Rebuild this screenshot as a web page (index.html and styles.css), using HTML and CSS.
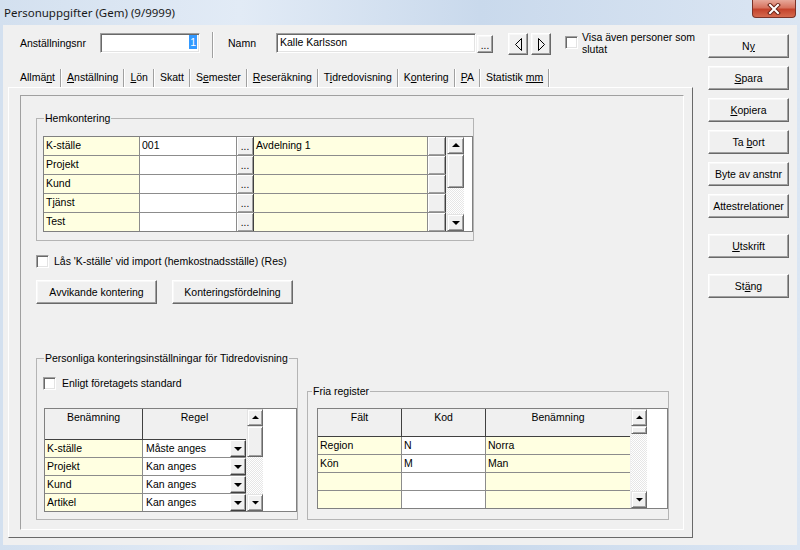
FILE: index.html
```html
<!DOCTYPE html>
<html lang="sv">
<head>
<meta charset="utf-8">
<title>Personuppgifter</title>
<link rel="stylesheet" href="styles.css">
</head>
<body>
<div class="window">
  <div class="titlebar">
    <span class="title">Personuppgifter (Gem) (9/9999)</span>
    <span class="close"><svg width="14" height="12" viewBox="0 0 14 12"><path d="M3 2 L11 10 M11 2 L3 10" stroke="#6a2418" stroke-width="4" stroke-linecap="square"/><path d="M3 2 L11 10 M11 2 L3 10" stroke="#fff" stroke-width="2" stroke-linecap="square"/></svg></span>
  </div>
  <div class="client">
    <div class="main">
      <div class="toprow">
        <span class="lbl lbl-nr">Anställningsnr</span>
        <div class="edit edit-nr"><span class="sel">1</span></div>
        <div class="vsep"></div>
        <span class="lbl lbl-namn">Namn</span>
        <div class="edit edit-namn">Kalle Karlsson</div>
        <div class="btn btn-dots">...</div>
        <div class="btn btn-arrow"><svg width="18" height="20" viewBox="0 0 18 20"><polygon points="12.5,4.5 6.5,10.5 12.5,16.5" fill="none" stroke="#000" stroke-width="1"/></svg></div>
        <div class="btn btn-arrow btn-arrow2"><svg width="18" height="20" viewBox="0 0 18 20"><polygon points="6.5,4.5 12.5,10.5 6.5,16.5" fill="none" stroke="#000" stroke-width="1"/></svg></div>
        <div class="check check-visa"><span class="box"></span><span class="check-text">Visa även personer som<br>slutat</span></div>
      </div>
      <div class="tabs">
        <span class="tab">Allmä<u>n</u>t</span>
        <span class="tab"><u>A</u>nställning</span>
        <span class="tab"><u>L</u>ön</span>
        <span class="tab">Skatt</span>
        <span class="tab">S<u>e</u>mester</span>
        <span class="tab"><u>R</u>eseräkning</span>
        <span class="tab">T<u>i</u>dredovisning</span>
        <span class="tab">K<u>o</u>ntering</span>
        <span class="tab"><u>P</u>A</span>
        <span class="tab">Statistik <u>mm</u></span>
      </div>
      <div class="tabpanel">
        <div class="inner">
          <fieldset class="group group-hem">
            <legend>Hemkontering</legend>
            <div class="dg dg-hem">
              <div class="dg-body">
                <div class="dg-row"><span class="c y h1">K-ställe</span><span class="c w h2">001</span><span class="c cbtn h3">...</span><span class="c y h4">Avdelning 1</span><span class="c cbtn h5"></span></div>
                <div class="dg-row"><span class="c y h1">Projekt</span><span class="c w h2"></span><span class="c cbtn h3">...</span><span class="c y h4"></span><span class="c cbtn h5"></span></div>
                <div class="dg-row"><span class="c y h1">Kund</span><span class="c w h2"></span><span class="c cbtn h3">...</span><span class="c y h4"></span><span class="c cbtn h5"></span></div>
                <div class="dg-row"><span class="c y h1">Tjänst</span><span class="c w h2"></span><span class="c cbtn h3">...</span><span class="c y h4"></span><span class="c cbtn h5"></span></div>
                <div class="dg-row"><span class="c y h1">Test</span><span class="c w h2"></span><span class="c cbtn h3">...</span><span class="c y h4"></span><span class="c cbtn h5"></span></div>
              </div>
              <div class="vscroll">
                <div class="sb-btn raised"><svg width="16" height="15" viewBox="0 0 16 15"><polygon points="4,9 12,9 8,5" fill="#000"/></svg></div>
                <div class="sb-thumb raised thumb-hem"></div>
                <div class="sb-track"></div>
                <div class="sb-btn raised"><svg width="16" height="15" viewBox="0 0 16 15"><polygon points="4,6 12,6 8,10" fill="#000"/></svg></div>
              </div>
            </div>
          </fieldset>

          <div class="check check-las"><span class="box"></span><span class="check-text">Lås 'K-ställe' vid import (hemkostnadsställe) (Res)</span></div>

          <div class="btnrow">
            <div class="btn btn-wide">Avvikande kontering</div>
            <div class="btn btn-wide">Konteringsfördelning</div>
          </div>

          <div class="bottomrow">
            <fieldset class="group group-pers">
              <legend>Personliga konteringsinställningar för Tidredovisning</legend>
              <div class="check check-std"><span class="box"></span><span class="check-text">Enligt företagets standard</span></div>
              <div class="dg dg-pers">
                <div class="dg-body">
                  <div class="dg-head head-pers"><span class="hc p1">Benämning</span><span class="hc p2">Regel</span></div>
                  <div class="dg-row r17"><span class="c y p1">K-ställe</span><span class="c w p2t">Måste anges</span><span class="c dd"><svg width="14" height="15" viewBox="0 0 14 15"><polygon points="3,6 11,6 7,10" fill="#000"/></svg></span></div>
                  <div class="dg-row r17"><span class="c y p1">Projekt</span><span class="c w p2t">Kan anges</span><span class="c dd"><svg width="14" height="15" viewBox="0 0 14 15"><polygon points="3,6 11,6 7,10" fill="#000"/></svg></span></div>
                  <div class="dg-row r17"><span class="c y p1">Kund</span><span class="c w p2t">Kan anges</span><span class="c dd"><svg width="14" height="15" viewBox="0 0 14 15"><polygon points="3,6 11,6 7,10" fill="#000"/></svg></span></div>
                  <div class="dg-row r17"><span class="c y p1">Artikel</span><span class="c w p2t">Kan anges</span><span class="c dd"><svg width="14" height="15" viewBox="0 0 14 15"><polygon points="3,6 11,6 7,10" fill="#000"/></svg></span></div>
                </div>
                <div class="vscroll vs17">
                  <div class="sb-btn raised"><svg width="15" height="15" viewBox="0 0 15 15"><polygon points="4,9 11,9 7.5,5.5" fill="#000"/></svg></div>
                  <div class="sb-thumb raised thumb-pers"></div>
                  <div class="sb-track"></div>
                  <div class="sb-btn raised"><svg width="15" height="15" viewBox="0 0 15 15"><polygon points="4,6 11,6 7.5,9.5" fill="#000"/></svg></div>
                </div>
              </div>
            </fieldset>

            <fieldset class="group group-fria">
              <legend>Fria register</legend>
              <div class="dg dg-fria">
                <div class="dg-body">
                  <div class="dg-head head-fria"><span class="hc f1">Fält</span><span class="hc f2">Kod</span><span class="hc f3">Benämning</span></div>
                  <div class="dg-row r17"><span class="c y f1">Region</span><span class="c w f2">N</span><span class="c y f3">Norra</span></div>
                  <div class="dg-row r17"><span class="c y f1">Kön</span><span class="c w f2">M</span><span class="c y f3">Man</span></div>
                  <div class="dg-row r17"><span class="c y f1"></span><span class="c w f2"></span><span class="c y f3"></span></div>
                  <div class="dg-row r17"><span class="c y f1"></span><span class="c w f2"></span><span class="c y f3"></span></div>
                </div>
                <div class="vscroll vs17">
                  <div class="sb-btn raised"><svg width="15" height="15" viewBox="0 0 15 15"><polygon points="4,9 11,9 7.5,5.5" fill="#000"/></svg></div>
                  <div class="sb-thumb raised thumb-fria"></div>
                  <div class="sb-track"></div>
                  <div class="sb-btn raised"><svg width="15" height="15" viewBox="0 0 15 15"><polygon points="4,6 11,6 7.5,9.5" fill="#000"/></svg></div>
                </div>
              </div>
            </fieldset>
          </div>
        </div>
      </div>
    </div>
    <div class="side">
      <div class="btn sbtn">N<u>y</u></div>
      <div class="btn sbtn"><u>S</u>para</div>
      <div class="btn sbtn"><u>K</u>opiera</div>
      <div class="btn sbtn">Ta <u>b</u>ort</div>
      <div class="btn sbtn">Byte av anstnr</div>
      <div class="btn sbtn">Attestrelationer</div>
      <div class="btn sbtn sbtn-gap"><u>U</u>tskrift</div>
      <div class="btn sbtn sbtn-gap">St<u>ä</u>ng</div>
    </div>
  </div>
</div>
</body>
</html>
```

FILE: styles.css
```css
* { box-sizing: border-box; }

body {
  margin: 0;
  font-family: "Liberation Sans", Arial, sans-serif;
  font-size: 10.5px;
  color: #000;
  background: #cfdcec;
}

.window {
  width: 800px;
  height: 550px;
  display: flex;
  flex-direction: column;
  overflow: hidden;
  background: linear-gradient(90deg, #d3e0ef 0%, #e2ebf6 30%, #c9d9ec 60%, #dbe6f3 100%);
}

.titlebar {
  height: 25px;
  flex: none;
  display: flex;
  justify-content: space-between;
  align-items: flex-start;
  padding-left: 4px;
}

.title {
  font-family: "Noto Sans", "Open Sans", sans-serif;
  font-size: 11.5px;
  line-height: 25px;
  color: #1a1a1a;
}

.close {
  width: 44px;
  height: 18px;
  margin-right: 4px;
  border: 1px solid #7b3328;
  border-top: none;
  border-radius: 0 0 4px 4px;
  background: linear-gradient(#e7a89a 0%, #d7735f 45%, #c4432c 55%, #d56a4f 100%);
  display: flex;
  align-items: center;
  justify-content: center;
}

.client {
  flex: 1;
  margin: 0 3px 5px 3px;
  background: #f0f0f0;
  display: flex;
}

.main {
  width: 694px;
  flex: none;
  display: flex;
  flex-direction: column;
}

/* ---------- top row ---------- */
.toprow {
  display: flex;
  align-items: flex-start;
  margin-top: 7px;
  height: 26px;
}

.lbl { line-height: 20px; margin-top: 1px; white-space: nowrap; }
.lbl-nr { margin-left: 17px; width: 80px; }
.lbl-namn { margin-left: 14px; width: 48px; }

.edit {
  height: 20px;
  margin-top: 1px;
  background: #fff;
  border: 1px solid;
  border-color: #a0a0a0 #fff #fff #a0a0a0;
  box-shadow: inset 1px 1px 0 #696969, inset -1px -1px 0 #e3e3e3;
  line-height: 17px;
  padding: 0 3px;
  white-space: nowrap;
}
.edit-nr { width: 100px; text-align: right; padding-right: 2px; }
.edit-namn { width: 200px; }

.sel {
  display: inline-block;
  background: #3399ff;
  color: #fff;
  line-height: 14px;
  padding: 0 1px;
  margin-top: 1px;
}

.vsep {
  width: 2px;
  height: 26px;
  margin-left: 12px;
  border-left: 1px solid #a0a0a0;
  border-right: 1px solid #fff;
}

.btn {
  background: #f0f0f0;
  border: 1px solid;
  border-color: #fff #696969 #696969 #fff;
  box-shadow: inset -1px -1px 0 #a0a0a0, inset 1px 1px 0 #f8f8f8;
  text-align: center;
  white-space: nowrap;
}

.btn-dots {
  width: 16px;
  height: 18px;
  margin: 3px 0 0 1px;
  line-height: 20px;
  font-size: 10px;
}

.btn-arrow {
  width: 20px;
  height: 22px;
  margin: 1px 0 0 15px;
}
.btn-arrow svg { display: block; }
.btn-arrow2 { margin-left: 3px; }

.check { display: flex; align-items: flex-start; }
.box {
  width: 13px;
  height: 13px;
  flex: none;
  background: #fff;
  border: 1px solid;
  border-color: #a0a0a0 #fff #fff #a0a0a0;
  box-shadow: inset 1px 1px 0 #696969, inset -1px -1px 0 #e3e3e3;
}
.check-text { margin-left: 5px; line-height: 13px; white-space: nowrap; }

.check-visa { margin-left: 14px; margin-top: 4px; }
.check-visa .check-text { margin-left: 4px; margin-top: -5px; line-height: 12px; }

/* ---------- tabs ---------- */
.tabs {
  display: flex;
  margin: 9px 0 0 12px;
  height: 20px;
}
.tab {
  margin-top: 2px;
  height: 18px;
  line-height: 17px;
  padding: 0 5px 0 5px;
  border-right: 1px solid #a0a0a0;
  box-shadow: 1px 0 0 #fff;
  margin-right: 1px;
  white-space: nowrap;
}

.tabpanel {
  margin-left: 5px;
  width: 685px;
  height: 451px;
  border: 1px solid;
  border-color: #fff #696969 #696969 #fff;
  padding: 7px 8px 7px 11px;
}

.inner {
  height: 100%;
  border: 1px solid;
  border-color: #a0a0a0 #fff #fff #a0a0a0;
  display: flex;
  flex-direction: column;
  align-items: flex-start;
  padding-left: 15px;
}

/* ---------- group boxes ---------- */
.group {
  margin: 0;
  padding: 0;
  border: 1px solid #b4b4b4;
  min-width: 0;
}
.group legend {
  padding: 0 1px;
  margin-left: 7px;
  line-height: 13px;
  height: 13px;
  white-space: nowrap;
}

.group-hem { margin-top: 16px; width: 438px; padding-bottom: 8px; }
.group-hem .dg { margin: 11px 0 0 6px; }

.check-las { margin-top: 14px; }

.btnrow { display: flex; gap: 15px; margin-top: 12px; }
.btn-wide { width: 121px; height: 24px; line-height: 22px; }

.bottomrow { display: flex; align-items: flex-end; margin-top: 48px; }

.group-pers { width: 262px; height: 168px; }
.check-std { margin: 12px 0 0 6px; }
.check-std .check-text { margin-left: 6px; }
.group-pers .dg { margin: 18px 0 0 7px; }
.group-pers legend { margin-left: 7px; }

.group-fria { width: 362px; height: 135px; margin-left: 9px; }
.group-fria legend { margin-left: 4px; }
.group-fria .dg { margin: 10px 0 0 9px; }

/* ---------- data grids ---------- */
.dg {
  display: flex;
  border: 1px solid #808080;
  background: #fff;
}
.dg-body { display: flex; flex-direction: column; }

.dg-row {
  display: flex;
  height: 19px;
  border-bottom: 1px solid #8c8c8c;
}
.dg-row:last-child { border-bottom: none; height: 18px; }
.dg-row.r17 { height: 18px; }
.dg-row.r17:last-child { height: 17px; }

.c {
  height: 100%;
  border-right: 1px solid #8c8c8c;
  padding-left: 2px;
  line-height: 17px;
  white-space: nowrap;
  overflow: hidden;
}
.y { background: #ffffe1; }
.w { background: #fff; }

.cbtn {
  padding: 0;
  text-align: center;
  background: #f0f0f0;
  border-right: 1px solid #404040;
  box-shadow: inset 1px 1px 0 #fff, inset -1px -1px 0 #a0a0a0;
  font-size: 10px;
  line-height: 19px;
}

.h1 { width: 96px; }
.h2 { width: 97px; }
.h3 { width: 17px; }
.h4 { width: 174px; }
.h5 { width: 18px; }

.dg-head {
  display: flex;
  border-bottom: 1px solid #404040;
  background: #f0f0f0;
}
.head-pers { height: 31px; }
.head-fria { height: 28px; }
.hc {
  height: 100%;
  border-right: 1px solid #404040;
  text-align: center;
  line-height: 13px;
  padding-top: 2px;
  background: #f0f0f0;
}
.dg-head .hc:last-child { border-right: none; }

.p1 { width: 98px; }
.p2 { width: 103px; }
.p2t { width: 87px; border-right: none; padding-left: 3px; }
.dd {
  width: 16px;
  padding: 0;
  background: #f0f0f0;
  border: 1px solid;
  border-color: #fff #404040 #404040 #fff;
  box-shadow: inset -1px -1px 0 #a0a0a0;
}
.dd svg { display: block; }

.f1 { width: 84px; }
.f2 { width: 84px; }
.f3 { width: 144px; border-right: none; }

/* ---------- scroll bars ---------- */
.vscroll {
  width: 18px;
  display: flex;
  flex-direction: column;
  border-left: 1px solid #f0f0f0;
}
.vs17 { width: 17px; }
.raised {
  background: #f0f0f0;
  border: 1px solid;
  border-color: #e3e3e3 #696969 #696969 #e3e3e3;
  box-shadow: inset 1px 1px 0 #fff, inset -1px -1px 0 #a0a0a0;
}
.sb-btn { height: 17px; flex: none; }
.sb-btn svg { display: block; }
.sb-track {
  flex: 1;
  background-color: #fff;
  background-image: repeating-conic-gradient(#e6e6e6 0 25%, #fff 0 50%);
  background-size: 2px 2px;
}
.thumb-hem { height: 34px; flex: none; }
.thumb-pers { height: 31px; flex: none; }
.thumb-fria { height: 8px; flex: none; }

/* ---------- side buttons ---------- */
.side {
  width: 81px;
  margin-left: 11px;
  padding-top: 9px;
  display: flex;
  flex-direction: column;
}
.sbtn {
  height: 24px;
  line-height: 22px;
  margin-bottom: 8px;
}
.sbtn-gap { margin-top: 8px; }
```
